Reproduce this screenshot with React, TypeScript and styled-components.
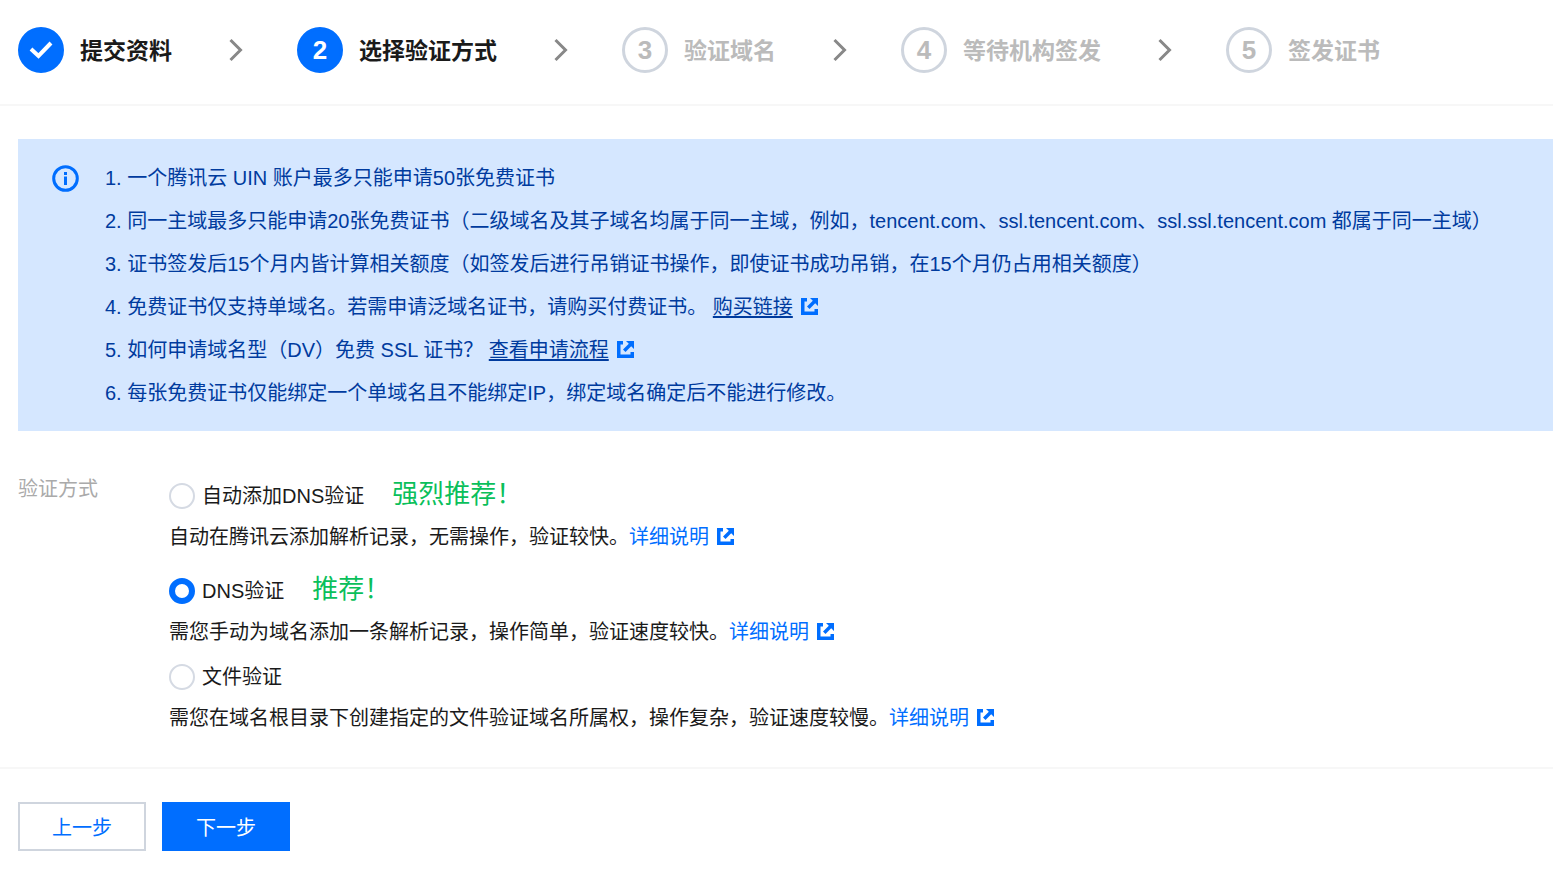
import React from "react";
import styled, { createGlobalStyle } from "styled-components";

const BLUE = "#006eff";

const GlobalStyle = createGlobalStyle`
  *, *::before, *::after { box-sizing: border-box; }
  body {
    margin: 0;
    background: #fff;
    color: #1a1a1a;
    font: 20px/30px "Liberation Sans", "Noto Sans CJK SC", sans-serif;
  }
`;

const Page = styled.main`
  display: flex;
  flex-direction: column;
`;

const Steps = styled.ol`
  display: flex;
  align-items: center;
  margin: 0;
  padding: 27px 18px 31px;
  list-style: none;
  border-bottom: 2px solid #f7f7f7;
`;

const Step = styled.li`
  display: flex;
  align-items: center;
  flex: none;
`;

type StepState = "done" | "current" | "pending";

const StepMark = styled.span<{ $state: StepState }>`
  display: flex;
  align-items: center;
  justify-content: center;
  width: 46px;
  height: 46px;
  margin-right: 16px;
  border: 3px solid ${(p) => (p.$state === "pending" ? "#cfd5de" : BLUE)};
  border-radius: 50%;
  background: ${(p) => (p.$state === "pending" ? "#fff" : BLUE)};
  color: ${(p) => (p.$state === "pending" ? "#bbb" : "#fff")};
  font: bold 26px/40px "Liberation Sans", sans-serif;
`;

const StepLabel = styled.span<{ $state: StepState }>`
  padding-top: 2px;
  color: ${(p) => (p.$state === "pending" ? "#bbb" : "#1a1a1a")};
  font-size: 23px;
  font-weight: bold;
  line-height: 32px;
`;

const StepArrow = styled.svg`
  width: 15px;
  height: 24px;
  margin: 0 54px 0 56px;
`;

const Notice = styled.section`
  display: flex;
  align-items: flex-start;
  margin: 33px 0 0 18px;
  padding: 18px 34px 16px;
  background: #d5e7ff;
  color: #003b9e;
`;

const InfoIcon = styled.svg`
  flex: none;
  width: 27px;
  height: 27px;
  margin: 8px 26px 0 0;
`;

const NoticeList = styled.ul`
  flex: 1;
  margin: 0;
  padding: 0;
  list-style: none;
  line-height: 43px;
`;

const NoticeItem = styled.li`
  white-space: nowrap;
`;

const NoticeLink = styled.a`
  color: #003b9e;
  text-decoration: underline;
  text-decoration-thickness: 2px;
  text-underline-offset: 2px;
`;

const LinkIcon = styled.svg`
  width: 17px;
  height: 17px;
  margin-left: 8px;
  vertical-align: -1px;
`;

const Form = styled.form`
  display: flex;
  flex-direction: column;
`;

const Field = styled.fieldset`
  display: flex;
  margin: 0;
  padding: 41px 18px 28px;
  border: 0;
  border-bottom: 2px solid #f7f7f7;
`;

const FieldName = styled.span`
  flex: none;
  width: 151px;
  padding-top: 2px;
  color: #aaa;
`;

const Options = styled.div`
  display: flex;
  flex-direction: column;
`;

const Option = styled.div<{ $spaced?: boolean }>`
  margin-bottom: ${(p) => (p.$spaced ? 9 : 0)}px;
`;

const OptionHead = styled.div`
  display: flex;
  align-items: center;
  height: 40px;
  margin-top: 4px;
`;

const OptionLabel = styled.label`
  display: flex;
  align-items: center;
  gap: 7px;
`;

const Radio = styled.input`
  appearance: none;
  width: 26px;
  height: 26px;
  margin: 0;
  border: 2px solid #d5dae3;
  border-radius: 50%;
  background: #fff;
  &:checked {
    border: 6px solid ${BLUE};
  }
`;

const Recommend = styled.strong`
  margin-left: 28px;
  padding-bottom: 4px;
  color: #0abf5b;
  font-size: 26px;
  font-weight: normal;
  line-height: 36px;
`;

const Description = styled.p`
  margin: 0;
  padding: 6px 0;
  line-height: 30px;
`;

const DetailLink = styled.a`
  color: ${BLUE};
  text-decoration: none;
`;

const Actions = styled.div`
  display: flex;
  gap: 16px;
  padding: 33px 18px 26px;
`;

const Button = styled.button<{ $primary?: boolean }>`
  width: 128px;
  height: 49px;
  padding: 2px 0 0;
  border: 2px solid ${(p) => (p.$primary ? BLUE : "#cfd5de")};
  background: ${(p) => (p.$primary ? BLUE : "#fff")};
  color: ${(p) => (p.$primary ? "#fff" : BLUE)};
  font: inherit;
`;

const steps: { label: string; state: StepState }[] = [
  { label: "提交资料", state: "done" },
  { label: "选择验证方式", state: "current" },
  { label: "验证域名", state: "pending" },
  { label: "等待机构签发", state: "pending" },
  { label: "签发证书", state: "pending" },
];

const notices: { text: string; link?: string }[] = [
  { text: "1. 一个腾讯云 UIN 账户最多只能申请50张免费证书" },
  { text: "2. 同一主域最多只能申请20张免费证书（二级域名及其子域名均属于同一主域，例如，tencent.com、ssl.tencent.com、ssl.ssl.tencent.com 都属于同一主域）" },
  { text: "3. 证书签发后15个月内皆计算相关额度（如签发后进行吊销证书操作，即使证书成功吊销，在15个月仍占用相关额度）" },
  { text: "4. 免费证书仅支持单域名。若需申请泛域名证书，请购买付费证书。", link: "购买链接" },
  { text: "5. 如何申请域名型（DV）免费 SSL 证书？", link: "查看申请流程" },
  { text: "6. 每张免费证书仅能绑定一个单域名且不能绑定IP，绑定域名确定后不能进行修改。" },
];

const options = [
  { id: "auto-dns", label: "自动添加DNS验证", tip: "强烈推荐！", text: "自动在腾讯云添加解析记录，无需操作，验证较快。", spaced: true },
  { id: "dns", label: "DNS验证", tip: "推荐！", text: "需您手动为域名添加一条解析记录，操作简单，验证速度较快。" },
  { id: "file", label: "文件验证", text: "需您在域名根目录下创建指定的文件验证域名所属权，操作复杂，验证速度较慢。" },
];

function ExternalIcon() {
  return (
    <LinkIcon viewBox="0 0 17 17" aria-hidden="true">
      <path d="M6 0H0V17H17V11H13.500V13.500H3.500V3.500H6Z" fill={BLUE} />
      <path d="M9 0H17V8L14.200 5.200L8.500 11L6 8.500L11.800 2.800Z" fill={BLUE} />
    </LinkIcon>
  );
}

export default function App() {
  return (
    <Page>
      <GlobalStyle />
      <Steps>
        {steps.map((step, i) => (
          <Step key={step.label}>
            <StepMark $state={step.state}>
              {step.state === "done" ? (
                <svg width="24" height="18" viewBox="0 0 24 18" aria-hidden="true">
                  <path d="M2 8L9.500 15L22 2" fill="none" stroke="#fff" strokeWidth="4" />
                </svg>
              ) : (
                i + 1
              )}
            </StepMark>
            <StepLabel $state={step.state}>{step.label}</StepLabel>
            {i < steps.length - 1 && (
              <StepArrow viewBox="0 0 15 24" aria-hidden="true">
                <path d="M2.500 2L12.500 12L2.500 22" fill="none" stroke="#888" strokeWidth="3" />
              </StepArrow>
            )}
          </Step>
        ))}
      </Steps>
      <Notice>
        <InfoIcon viewBox="0 0 27 27" aria-hidden="true">
          <circle cx="13.500" cy="13.500" r="11.800" fill="none" stroke={BLUE} strokeWidth="3" />
          <path d="M12 7H15V10H12ZM12 11.500H15V20H12Z" fill={BLUE} />
        </InfoIcon>
        <NoticeList>
          {notices.map((n) => (
            <NoticeItem key={n.text}>
              {n.text}
              {n.link && (
                <>
                  {" "}
                  <NoticeLink href="#">{n.link}</NoticeLink>
                  <ExternalIcon />
                </>
              )}
            </NoticeItem>
          ))}
        </NoticeList>
      </Notice>
      <Form>
        <Field aria-labelledby="method-name">
          <FieldName id="method-name">验证方式</FieldName>
          <Options>
            {options.map((o) => (
              <Option key={o.id} $spaced={o.spaced}>
                <OptionHead>
                  <OptionLabel htmlFor={o.id}>
                    <Radio type="radio" name="method" id={o.id} defaultChecked={o.id === "dns"} />
                    {o.label}
                  </OptionLabel>
                  {o.tip && <Recommend>{o.tip}</Recommend>}
                </OptionHead>
                <Description>
                  {o.text}
                  <DetailLink href="#">
                    详细说明
                    <ExternalIcon />
                  </DetailLink>
                </Description>
              </Option>
            ))}
          </Options>
        </Field>
        <Actions>
          <Button type="button">上一步</Button>
          <Button type="button" $primary>下一步</Button>
        </Actions>
      </Form>
    </Page>
  );
}
